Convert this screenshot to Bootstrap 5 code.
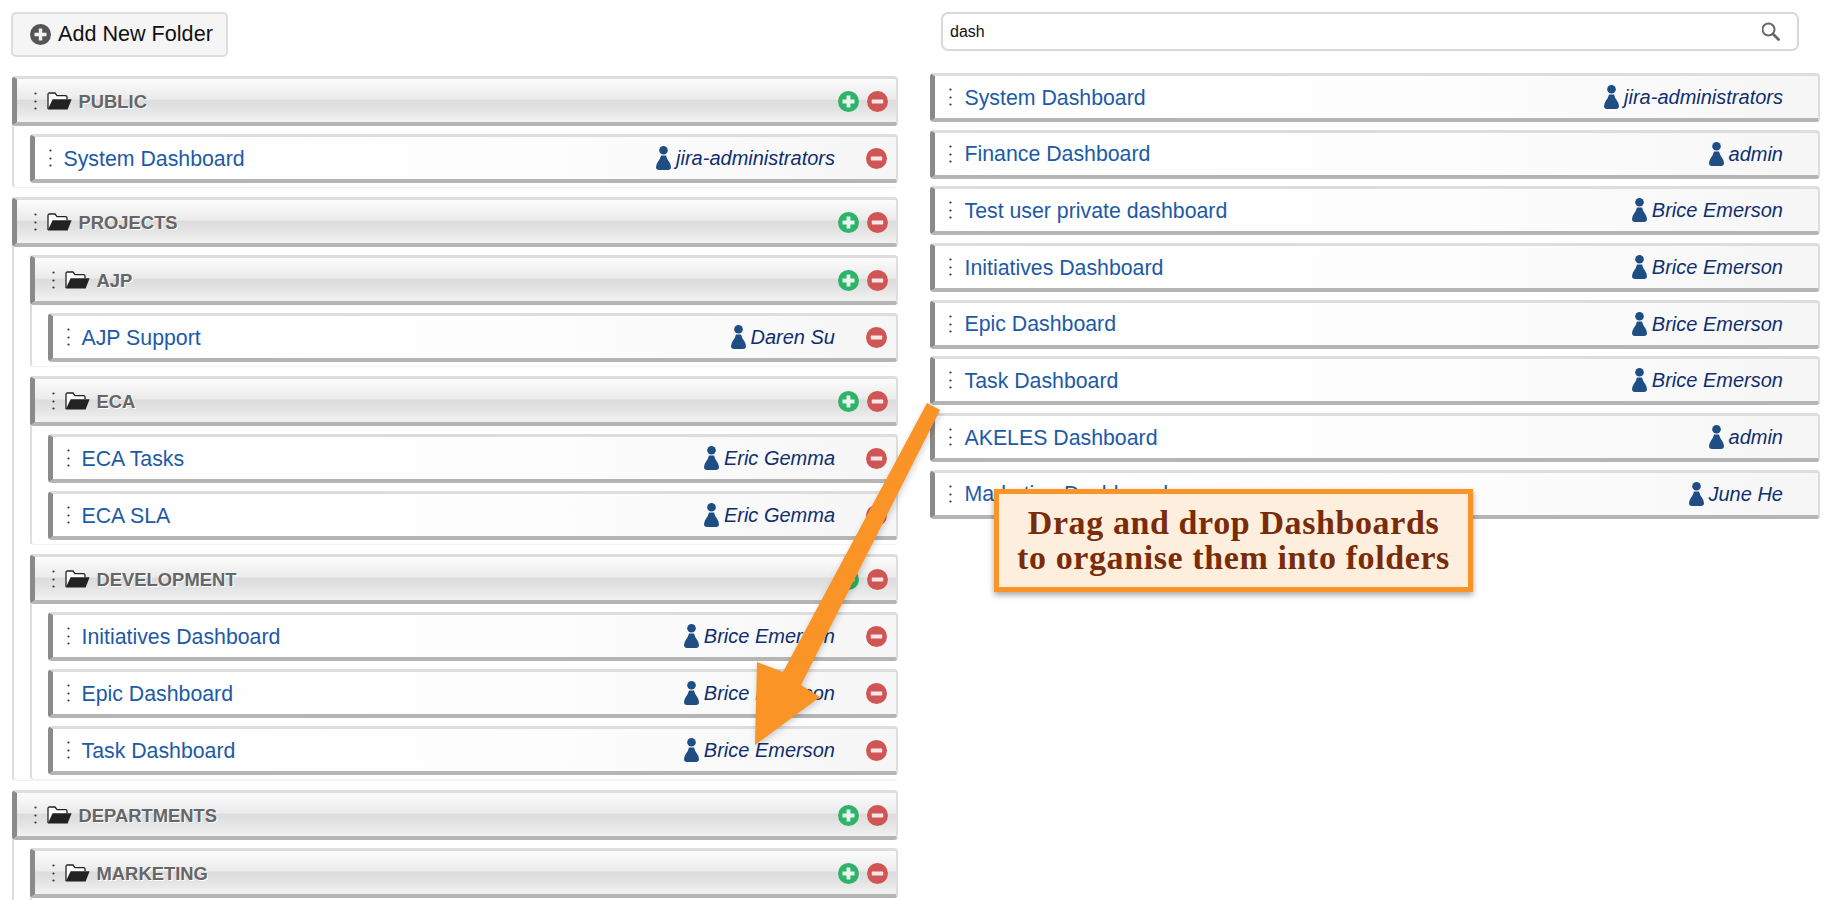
<!DOCTYPE html>
<html lang="en">

<head>
  <meta charset="UTF-8">
  <title>Dashboard Folders</title>
  <link href="https://cdn.jsdelivr.net/npm/bootstrap@5.3.3/dist/css/bootstrap.min.css" rel="stylesheet">
  <style>
    html, body { height: 900px; overflow: hidden; }
    body { font-family: "Liberation Sans", Arial, sans-serif; background: #fff; position: relative; }

    .page-wrap { padding: 12px 20px 0 12px; gap: 32px; }
    .left-side { flex: 0 0 886px; }
    .right-side { flex: 0 0 890px; }

    .add-btn {
      height: 45px; width: 217px; margin-left: -1px; margin-bottom: 19px; padding: 0 0 0 17px;
      background: #f5f5f5; border: 2px solid #ddd; border-radius: 5px;
      font-size: 21.6px; color: #111; gap: 7px;
    }
    .search-box { width: 858px; height: 39px; margin: 0 0 22px 11px; }
    .search-box .form-control {
      border: 2px solid #d8d8d8; border-right: 0; border-radius: 7px 0 0 7px;
      font-size: 16px; padding: 0 0 0 7px; color: #111; box-shadow: none;
    }
    .search-box .input-group-text {
      background: #fff; border: 2px solid #d8d8d8; border-left: 0; border-radius: 0 7px 7px 0; padding: 0 17px 0 0;
    }

    .folder-box {
      border-left: 2px solid #ddd; border-bottom: 1px solid #f3f3f3; border-radius: 4px;
      padding: 0 0 4px 16px; margin-bottom: 9px;
    }
    .folder-box .folder-box:last-child { margin-bottom: 0; }

    .folder-head {
      height: 50px; margin: 0 0 8px -18px; padding: 1px 8px 0 16.5px;
      border: 3px solid #ddd; border-right-width: 2px; border-left: 5px solid #8a8a8a; border-bottom: 4px solid #b5b5b5;
      border-radius: 4px;
      background: linear-gradient(#fcfcfc 0%, #ebebeb 46%, #dcdcdc 50%, #e3e3e3 70%, #f2f2f2 100%);
    }
    .folder-name {
      margin: 2px 0 0 6.5px; font-size: 18.4px; font-weight: 700; color: #666; text-shadow: 1px 1px 0 #fff;
    }
    .round-btn { width: 21px; height: 21px; flex: none; }
    .round-btn + .round-btn { margin-left: 8px; }

    .dash-row {
      height: 49px; padding-left: 14px; padding-right: 9px;
      border: 3px solid #ddd; border-right-width: 2px; border-left: 5px solid #8a8a8a; border-bottom: 4px solid #b5b5b5;
      border-radius: 4px;
      background: linear-gradient(90deg, #fff 0%, #fdfdfd 60%, #f6f6f6 100%);
    }
    .dash-row + .dash-row { margin-top: 8px; }
    .dash-link { margin: 3px 0 0 11.5px; font-size: 21.3px; color: #1d5aa6; text-decoration: none; }
    .dash-owner { font-size: 20px; font-style: italic; color: #0f2f6e; margin-left: 5px; }
    .owner-gap { margin-right: 31px; }
    .right-side .dash-row { padding-right: 35px; }
    .right-side .dash-row + .dash-row { margin-top: 7.7px; }
    .right-side .dash-link { margin-left: 12.5px; }

    .drag-dots { width: 3px; height: 18px; flex: none; }
    .folder-icon { width: 25px; height: 18px; margin-left: 10.5px; flex: none; }
    .person-icon { width: 15px; height: 24px; flex: none; }

    .hint-arrow {
      position: absolute; left: 740px; top: 395px; width: 210px; height: 365px;
      filter: drop-shadow(1px 2px 3px rgba(0, 0, 0, .2));
    }
    .hint-box {
      position: absolute; left: 994px; top: 489px; width: 479px; height: 103px;
      border: 5px solid #fa9426; background: #fdeedd; box-shadow: 0 3px 6px rgba(0, 0, 0, .35);
      font-family: "Liberation Serif", "Times New Roman", serif; font-weight: 700; font-size: 34px; line-height: 35px;
      letter-spacing: .6px; color: #7a2c08; text-align: center; padding-top: 11px; white-space: nowrap;
    }
  </style>
</head>

<body>
  <svg width="0" height="0" class="position-absolute">
    <symbol id="i-dots" viewBox="0 0 3 18">
      <circle cx="1.5" cy="1.5" r="1.1" fill="#333" />
      <circle cx="1.5" cy="9.5" r="1.1" fill="#333" />
      <circle cx="1.5" cy="16.5" r="1.1" fill="#333" />
    </symbol>
    <symbol id="i-folder" viewBox="0 0 25 18">
      <path d="M1 17V2.5Q1 1 2.5 1H8l2 2.6h8.5Q20 3.6 20 5v2.2" fill="#fff" stroke="#222" stroke-width="1.3" />
      <path d="M5.6 7.2H24.6L20.6 17.6H.8Z" fill="#222" />
    </symbol>
    <symbol id="i-person" viewBox="0 0 15 24">
      <circle cx="7.5" cy="4.3" r="4.3" fill="#1f4e85" />
      <path d="M5 9.5h5q.8 3.4 3.2 6.4 1.8 2.4 1.8 5.1 0 3-3 3H3q-3 0-3-3 0-2.7 1.8-5.1Q4.2 12.9 5 9.5Z" fill="#1f4e85" />
    </symbol>
    <symbol id="i-plus" viewBox="0 0 21 21">
      <circle cx="10.5" cy="10.5" r="10.5" fill="#2fb26a" />
      <path d="M8.6 4.5h3.8v4.1h4.1v3.8h-4.1v4.1H8.6v-4.1H4.5V8.6h4.1Z" fill="#e6f6ec" />
    </symbol>
    <symbol id="i-minus" viewBox="0 0 21 21">
      <circle cx="10.5" cy="10.5" r="10.5" fill="#d05555" />
      <rect x="4.8" y="8.6" width="11.4" height="3.8" rx=".6" fill="#f9e6e6" />
    </symbol>
  </svg>

  <div class="d-flex page-wrap">
    <div class="left-side">
      <button type="button" class="btn add-btn d-flex align-items-center">
        <svg width="21" height="21" viewBox="0 0 21 21"><circle cx="10.5" cy="10.5" r="10.5" fill="#555" /><path d="M8.8 4.5h3.4v4.3h4.3v3.4h-4.3v4.3H8.8v-4.3H4.5V8.8h4.3Z" fill="#f2f2f2" /></svg>
        Add New Folder
      </button>

      <div class="folder-box">
        <div class="folder-head d-flex align-items-center">
          <svg class="drag-dots"><use href="#i-dots" /></svg>
          <svg class="folder-icon"><use href="#i-folder" /></svg>
          <span class="folder-name">PUBLIC</span>
          <svg class="round-btn ms-auto"><use href="#i-plus" /></svg>
          <svg class="round-btn"><use href="#i-minus" /></svg>
        </div>
        <div class="dash-row d-flex align-items-center">
          <svg class="drag-dots"><use href="#i-dots" /></svg>
          <a href="#" class="dash-link">System Dashboard</a>
          <svg class="person-icon ms-auto"><use href="#i-person" /></svg>
          <span class="dash-owner owner-gap">jira-administrators</span>
          <svg class="round-btn"><use href="#i-minus" /></svg>
        </div>
      </div>

      <div class="folder-box pb-0">
        <div class="folder-head d-flex align-items-center">
          <svg class="drag-dots"><use href="#i-dots" /></svg>
          <svg class="folder-icon"><use href="#i-folder" /></svg>
          <span class="folder-name">PROJECTS</span>
          <svg class="round-btn ms-auto"><use href="#i-plus" /></svg>
          <svg class="round-btn"><use href="#i-minus" /></svg>
        </div>

        <div class="folder-box">
          <div class="folder-head d-flex align-items-center">
            <svg class="drag-dots"><use href="#i-dots" /></svg>
            <svg class="folder-icon"><use href="#i-folder" /></svg>
            <span class="folder-name">AJP</span>
            <svg class="round-btn ms-auto"><use href="#i-plus" /></svg>
            <svg class="round-btn"><use href="#i-minus" /></svg>
          </div>
          <div class="dash-row d-flex align-items-center">
            <svg class="drag-dots"><use href="#i-dots" /></svg>
            <a href="#" class="dash-link">AJP Support</a>
            <svg class="person-icon ms-auto"><use href="#i-person" /></svg>
            <span class="dash-owner owner-gap">Daren Su</span>
            <svg class="round-btn"><use href="#i-minus" /></svg>
          </div>
        </div>

        <div class="folder-box">
          <div class="folder-head d-flex align-items-center">
            <svg class="drag-dots"><use href="#i-dots" /></svg>
            <svg class="folder-icon"><use href="#i-folder" /></svg>
            <span class="folder-name">ECA</span>
            <svg class="round-btn ms-auto"><use href="#i-plus" /></svg>
            <svg class="round-btn"><use href="#i-minus" /></svg>
          </div>
          <div class="dash-row d-flex align-items-center">
            <svg class="drag-dots"><use href="#i-dots" /></svg>
            <a href="#" class="dash-link">ECA Tasks</a>
            <svg class="person-icon ms-auto"><use href="#i-person" /></svg>
            <span class="dash-owner owner-gap">Eric Gemma</span>
            <svg class="round-btn"><use href="#i-minus" /></svg>
          </div>
          <div class="dash-row d-flex align-items-center">
            <svg class="drag-dots"><use href="#i-dots" /></svg>
            <a href="#" class="dash-link">ECA SLA</a>
            <svg class="person-icon ms-auto"><use href="#i-person" /></svg>
            <span class="dash-owner owner-gap">Eric Gemma</span>
            <svg class="round-btn"><use href="#i-minus" /></svg>
          </div>
        </div>

        <div class="folder-box">
          <div class="folder-head d-flex align-items-center">
            <svg class="drag-dots"><use href="#i-dots" /></svg>
            <svg class="folder-icon"><use href="#i-folder" /></svg>
            <span class="folder-name">DEVELOPMENT</span>
            <svg class="round-btn ms-auto"><use href="#i-plus" /></svg>
            <svg class="round-btn"><use href="#i-minus" /></svg>
          </div>
          <div class="dash-row d-flex align-items-center">
            <svg class="drag-dots"><use href="#i-dots" /></svg>
            <a href="#" class="dash-link">Initiatives Dashboard</a>
            <svg class="person-icon ms-auto"><use href="#i-person" /></svg>
            <span class="dash-owner owner-gap">Brice Emerson</span>
            <svg class="round-btn"><use href="#i-minus" /></svg>
          </div>
          <div class="dash-row d-flex align-items-center">
            <svg class="drag-dots"><use href="#i-dots" /></svg>
            <a href="#" class="dash-link">Epic Dashboard</a>
            <svg class="person-icon ms-auto"><use href="#i-person" /></svg>
            <span class="dash-owner owner-gap">Brice Emerson</span>
            <svg class="round-btn"><use href="#i-minus" /></svg>
          </div>
          <div class="dash-row d-flex align-items-center">
            <svg class="drag-dots"><use href="#i-dots" /></svg>
            <a href="#" class="dash-link">Task Dashboard</a>
            <svg class="person-icon ms-auto"><use href="#i-person" /></svg>
            <span class="dash-owner owner-gap">Brice Emerson</span>
            <svg class="round-btn"><use href="#i-minus" /></svg>
          </div>
        </div>
      </div>

      <div class="folder-box pb-0">
        <div class="folder-head d-flex align-items-center">
          <svg class="drag-dots"><use href="#i-dots" /></svg>
          <svg class="folder-icon"><use href="#i-folder" /></svg>
          <span class="folder-name">DEPARTMENTS</span>
          <svg class="round-btn ms-auto"><use href="#i-plus" /></svg>
          <svg class="round-btn"><use href="#i-minus" /></svg>
        </div>
        <div class="folder-box">
          <div class="folder-head d-flex align-items-center">
            <svg class="drag-dots"><use href="#i-dots" /></svg>
            <svg class="folder-icon"><use href="#i-folder" /></svg>
            <span class="folder-name">MARKETING</span>
            <svg class="round-btn ms-auto"><use href="#i-plus" /></svg>
            <svg class="round-btn"><use href="#i-minus" /></svg>
          </div>
        </div>
      </div>
    </div>

    <div class="right-side">
      <div class="input-group search-box">
        <input type="text" class="form-control" value="dash">
        <span class="input-group-text">
          <svg width="19" height="19" viewBox="0 0 19 19" fill="none" stroke="#666"><circle cx="7.5" cy="7.5" r="6" stroke-width="2" /><path d="M12 12l5.5 5.5" stroke-width="2.8" stroke-linecap="round" /></svg>
        </span>
      </div>

      <div class="dash-row d-flex align-items-center">
        <svg class="drag-dots"><use href="#i-dots" /></svg>
        <a href="#" class="dash-link">System Dashboard</a>
        <svg class="person-icon ms-auto"><use href="#i-person" /></svg>
        <span class="dash-owner">jira-administrators</span>
      </div>
      <div class="dash-row d-flex align-items-center">
        <svg class="drag-dots"><use href="#i-dots" /></svg>
        <a href="#" class="dash-link">Finance Dashboard</a>
        <svg class="person-icon ms-auto"><use href="#i-person" /></svg>
        <span class="dash-owner">admin</span>
      </div>
      <div class="dash-row d-flex align-items-center">
        <svg class="drag-dots"><use href="#i-dots" /></svg>
        <a href="#" class="dash-link">Test user private dashboard</a>
        <svg class="person-icon ms-auto"><use href="#i-person" /></svg>
        <span class="dash-owner">Brice Emerson</span>
      </div>
      <div class="dash-row d-flex align-items-center">
        <svg class="drag-dots"><use href="#i-dots" /></svg>
        <a href="#" class="dash-link">Initiatives Dashboard</a>
        <svg class="person-icon ms-auto"><use href="#i-person" /></svg>
        <span class="dash-owner">Brice Emerson</span>
      </div>
      <div class="dash-row d-flex align-items-center">
        <svg class="drag-dots"><use href="#i-dots" /></svg>
        <a href="#" class="dash-link">Epic Dashboard</a>
        <svg class="person-icon ms-auto"><use href="#i-person" /></svg>
        <span class="dash-owner">Brice Emerson</span>
      </div>
      <div class="dash-row d-flex align-items-center">
        <svg class="drag-dots"><use href="#i-dots" /></svg>
        <a href="#" class="dash-link">Task Dashboard</a>
        <svg class="person-icon ms-auto"><use href="#i-person" /></svg>
        <span class="dash-owner">Brice Emerson</span>
      </div>
      <div class="dash-row d-flex align-items-center">
        <svg class="drag-dots"><use href="#i-dots" /></svg>
        <a href="#" class="dash-link">AKELES Dashboard</a>
        <svg class="person-icon ms-auto"><use href="#i-person" /></svg>
        <span class="dash-owner">admin</span>
      </div>
      <div class="dash-row d-flex align-items-center">
        <svg class="drag-dots"><use href="#i-dots" /></svg>
        <a href="#" class="dash-link">Marketing Dashboard</a>
        <svg class="person-icon ms-auto"><use href="#i-person" /></svg>
        <span class="dash-owner">June He</span>
      </div>
    </div>
  </div>

  <!-- annotation on top of the lists -->
  <svg class="hint-arrow" viewBox="740 395 210 365">
    <path d="M927 403L940 410 801 685 820 697 755 745 757 662 783 672Z" fill="#fa9426" />
  </svg>
  <div class="hint-box">Drag and drop Dashboards<br>to organise them into folders</div>

  <script src="https://cdn.jsdelivr.net/npm/bootstrap@5.3.3/dist/js/bootstrap.bundle.min.js"></script>
</body>

</html>
